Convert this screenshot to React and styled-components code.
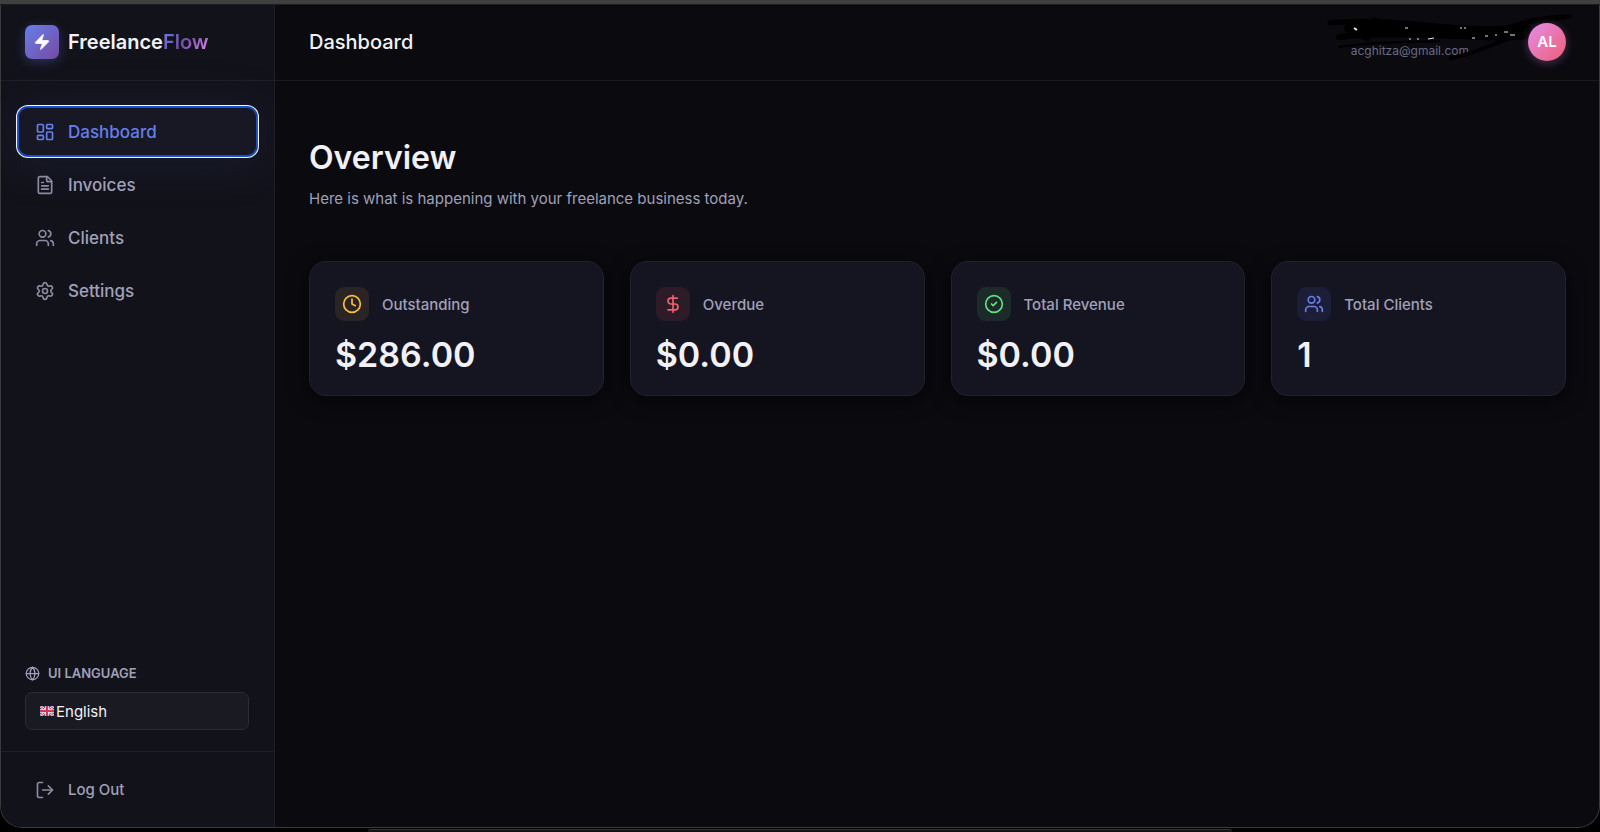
import React from 'react';
import styled, { createGlobalStyle } from 'styled-components';
import {
    LayoutDashboard,
    FileText,
    Users,
    Settings,
    Globe,
    LogOut,
    Clock,
    DollarSign,
    CircleCheck,
} from 'lucide-react';

const GlobalStyle = createGlobalStyle`
  * {
    box-sizing: border-box;
  }
  body {
    margin: 0;
    background: #000;
    color: #f1f1f7;
    font-family: 'Inter', 'Liberation Sans', sans-serif;
  }
  h1, h2, p {
    margin: 0;
  }
`;

const Screen = styled.div`
  display: flex;
  flex-direction: column;
  height: 100vh;
  overflow: hidden;
`;

const TitleStrip = styled.div`
  flex: none;
  height: 5px;
  background: #3f3f3f;
  border-bottom: 1px solid #1c1c1e;
`;

const Window = styled.div`
  flex: 1;
  min-height: 0;
  display: flex;
  background: #0a0a0f;
  border: 1px solid #3a3a3d;
  border-top: none;
  border-radius: 0 0 22px 22px;
  overflow: hidden;
`;

/* edge of the window that sits behind this one */
const BackWindow = styled.div`
  flex: none;
  height: 3px;
  margin: 1px 23% 0;
  background: #141414;
  border-top: 1px solid #353535;
  border-radius: 12px 12px 0 0;
`;

const Sidebar = styled.aside`
  flex: none;
  width: 274px;
  display: flex;
  flex-direction: column;
  background: #12121a;
  border-right: 1px solid #1f1f27;
  overflow: hidden;
`;

const Brand = styled.div`
  height: 76px;
  padding: 0 24px 2px;
  display: flex;
  align-items: center;
  gap: 9px;
  border-bottom: 1px solid #1f1f27;
  font-size: 20px;
  font-weight: 600;
`;

const BrandIcon = styled.span`
  width: 34px;
  height: 34px;
  display: flex;
  align-items: center;
  justify-content: center;
  border-radius: 7px;
  background: linear-gradient(135deg, #667eea 0%, #764ba2 100%);
  box-shadow: 0 3px 12px rgba(102, 126, 234, 0.3);
`;

const BrandAccent = styled.span`
  background: linear-gradient(135deg, #667eea 0%, #764ba2 50%, #f093fb 100%);
  background-clip: text;
  color: transparent;
`;

const Nav = styled.nav`
  flex: 1;
  padding: 26px 17px;
  display: flex;
  flex-direction: column;
  gap: 4px;
`;

const NavLink = styled.a`
  height: 49px;
  padding: 0 17px;
  display: flex;
  align-items: center;
  gap: 13px;
  border-radius: 10px;
  color: ${({ $active }) => ($active ? '#667eea' : '#a0a0b8')};
  background: ${({ $active }) => ($active ? '#181824' : 'transparent')};
  box-shadow: ${({ $active }) =>
        $active
            ? 'inset 0 0 0 1px #1a4fc4, 0 0 0 1px #1d55d0, 0 0 0 2px #f4f5fa, 0 4px 48px 12px rgba(102, 126, 234, 0.07)'
            : 'none'};
  font-size: 17px;
  font-weight: 500;
  text-decoration: none;

  svg {
    opacity: ${({ $active }) => ($active ? 1 : 0.85)};
  }
`;

const Language = styled.div`
  padding: 0 25px 21px 24px;
  display: flex;
  flex-direction: column;
  gap: 10px;
`;

const LanguageLabel = styled.label`
  display: flex;
  align-items: center;
  gap: 8px;
  color: #a0a0b8;
  font-size: 13px;
  line-height: 18px;
  font-weight: 600;
`;

const SelectBox = styled.div`
  height: 38px;
  padding-left: 14px;
  display: flex;
  align-items: center;
  gap: 2px;
  background: #1a1a22;
  border: 1px solid #2c2c35;
  border-radius: 7px;
`;

const Select = styled.select`
  flex: 1;
  height: 100%;
  padding: 0;
  appearance: none;
  background: transparent;
  border: none;
  outline: none;
  color: #f1f1f7;
  font-family: inherit;
  font-size: 15px;

  option {
    background: #1a1a22;
  }
`;

const SidebarFooter = styled.div`
  padding: 17px;
  border-top: 1px solid #1f1f27;
`;

const LogOutButton = styled.button`
  width: 100%;
  height: 41px;
  padding: 0 17px;
  display: flex;
  align-items: center;
  gap: 13px;
  background: none;
  border: none;
  color: #a0a0b8;
  font-family: inherit;
  font-size: 15px;
  font-weight: 500;

  svg {
    opacity: 0.85;
  }
`;

const Main = styled.main`
  flex: 1;
  min-width: 0;
`;

const Header = styled.header`
  height: 76px;
  padding: 0 33px 2px 34px;
  display: flex;
  align-items: center;
  justify-content: space-between;
  border-bottom: 1px solid #191920;
`;

const PageTitle = styled.h1`
  font-size: 20px;
  font-weight: 500;
`;

const Account = styled.div`
  position: relative;
  display: flex;
  align-items: center;
  gap: 59px;
`;

const Email = styled.p`
  padding-top: 18px;
  color: #6b6b85;
  font-size: 12px;
  line-height: 18px;
`;

const Scribble = styled.svg`
  position: absolute;
  left: -24px;
  top: -10px;
  pointer-events: none;
`;

const Avatar = styled.span`
  position: relative;
  width: 38px;
  height: 38px;
  display: flex;
  align-items: center;
  justify-content: center;
  border-radius: 50%;
  background: linear-gradient(135deg, #e58cea 0%, #ee5f74 100%);
  box-shadow: 0 2px 10px rgba(240, 147, 251, 0.3);
  color: #fff;
  font-size: 15px;
  font-weight: 600;
`;

const Content = styled.section`
  padding: 53px 33px 34px 34px;
`;

const Heading = styled.h2`
  font-size: 32px;
  line-height: 48px;
  font-weight: 600;
`;

const Subtitle = styled.p`
  margin-top: 5px;
  color: #a0a0b8;
  font-size: 15px;
  line-height: 24px;
`;

const Cards = styled.div`
  margin-top: 50px;
  display: grid;
  grid-template-columns: repeat(4, 1fr);
  gap: 26px;
`;

const Card = styled.article`
  padding: 25px 25px 20px;
  background: #151521;
  border: 1px solid #22222d;
  border-radius: 17px;
  box-shadow: 0 4px 20px rgba(0, 0, 0, 0.5);
`;

const CardTop = styled.div`
  display: flex;
  align-items: center;
  gap: 13px;
  color: #a0a0b8;
  font-size: 15px;
  font-weight: 500;
`;

const CardIcon = styled.span`
  width: 34px;
  height: 34px;
  display: flex;
  align-items: center;
  justify-content: center;
  border-radius: 9px;
  color: ${({ $color }) => $color};
  background: ${({ $tint }) => $tint};
`;

const CardValue = styled.p`
  margin-top: 14px;
  font-size: 34px;
  line-height: 40px;
  font-weight: 600;
`;

const navItems = [
    { label: 'Dashboard', icon: LayoutDashboard, active: true },
    { label: 'Invoices', icon: FileText },
    { label: 'Clients', icon: Users },
    { label: 'Settings', icon: Settings },
];

const stats = [
    { label: 'Outstanding', value: '$286.00', icon: Clock, color: '#fbbf3a', tint: '#2a2524' },
    { label: 'Overdue', value: '$0.00', icon: DollarSign, color: '#f0626e', tint: '#2d1b27' },
    { label: 'Total Revenue', value: '$0.00', icon: CircleCheck, color: '#62e27c', tint: '#1c2a2a' },
    { label: 'Total Clients', value: '1', icon: Users, color: '#667eea', tint: '#1c1e38' },
];

const Bolt = () => (
    <svg width="18" height="18" viewBox="0 0 24 24" fill="#fff" stroke="#fff" strokeWidth="1" strokeLinejoin="round">
        <path d="M4 14a1 1 0 0 1-.78-1.63l9.9-10.2a.5.5 0 0 1 .86.46l-1.92 6.02A1 1 0 0 0 13 10h7a1 1 0 0 1 .78 1.63l-9.9 10.2a.5.5 0 0 1-.86-.46l1.92-6.02A1 1 0 0 0 11 14z" />
    </svg>
);

const Flag = () => (
    <svg width="14" height="10" viewBox="0 0 28 20" aria-hidden="true">
        <rect width="28" height="20" rx="2" fill="#3a4a94" />
        <path d="M0 0L28 20M28 0L0 20" stroke="#ece6ee" strokeWidth="5" />
        <path d="M0 0L28 20M28 0L0 20" stroke="#d8455c" strokeWidth="2" />
        <path d="M14 0V20M0 10H28" stroke="#ece6ee" strokeWidth="7" />
        <path d="M14 0V20M0 10H28" stroke="#d8384f" strokeWidth="4" />
    </svg>
);

const PenMarks = () => (
    <Scribble width="250" height="50" viewBox="0 0 250 50" fill="none" aria-hidden="true">
        <g stroke="#000" strokeLinecap="round" strokeLinejoin="round">
            <path d="M3 10C40 6 80 10 120 14S180 14 200 14" strokeWidth="5" />
            <path d="M28 14C60 13 90 16 130 19S180 21 199 20" strokeWidth="13" />
            <path d="M12 24C50 19 100 23 150 23S190 21 200 19" strokeWidth="6" />
            <path d="M12 34C50 28 90 29 112 28" strokeWidth="2" />
            <path d="M22 15L40 23" strokeWidth="10" />
            <path d="M176 15C200 7 225 3 243 3C238 6 215 8 200 10" strokeWidth="3" />
            <path d="M124 45C150 41 165 30 200 19" strokeWidth="4" />
            <path d="M46 5L60 8" strokeWidth="1" />
        </g>
        <g stroke="#e9e9ee" strokeWidth="1">
            <path d="M27 15l3 2" strokeWidth="2" />
            <path d="M78 15h3M133 15h2M137 15h2M82 26h2M90 26h2M101 26l6-1M145 25h3M158 23h3M168 22h2" />
            <path d="M177 19h4M183 22h5" />
        </g>
    </Scribble>
);

const App = () => {
    return (
        <>
            <GlobalStyle />
            <Screen>
                <TitleStrip />
                <Window>
                    <Sidebar>
                        <Brand>
                            <BrandIcon><Bolt /></BrandIcon>
                            <span>Freelance<BrandAccent>Flow</BrandAccent></span>
                        </Brand>
                        <Nav>
                            {navItems.map(({ label, icon: Icon, active }) => (
                                <NavLink key={label} href="#" $active={active}>
                                    <Icon size={20} />
                                    {label}
                                </NavLink>
                            ))}
                        </Nav>
                        <Language>
                            <LanguageLabel htmlFor="language">
                                <Globe size={15} />
                                UI LANGUAGE
                            </LanguageLabel>
                            <SelectBox>
                                <Flag />
                                <Select id="language" defaultValue="en">
                                    <option value="en">English</option>
                                </Select>
                            </SelectBox>
                        </Language>
                        <SidebarFooter>
                            <LogOutButton type="button">
                                <LogOut size={20} />
                                Log Out
                            </LogOutButton>
                        </SidebarFooter>
                    </Sidebar>
                    <Main>
                        <Header>
                            <PageTitle>Dashboard</PageTitle>
                            <Account>
                                <Email>acghitza@gmail.com</Email>
                                <PenMarks />
                                <Avatar>AL</Avatar>
                            </Account>
                        </Header>
                        <Content>
                            <Heading>Overview</Heading>
                            <Subtitle>Here is what is happening with your freelance business today.</Subtitle>
                            <Cards>
                                {stats.map(({ label, value, icon: Icon, color, tint }) => (
                                    <Card key={label}>
                                        <CardTop>
                                            <CardIcon $color={color} $tint={tint}><Icon size={20} /></CardIcon>
                                            {label}
                                        </CardTop>
                                        <CardValue>{value}</CardValue>
                                    </Card>
                                ))}
                            </Cards>
                        </Content>
                    </Main>
                </Window>
                <BackWindow />
            </Screen>
        </>
    );
};

export default App;
